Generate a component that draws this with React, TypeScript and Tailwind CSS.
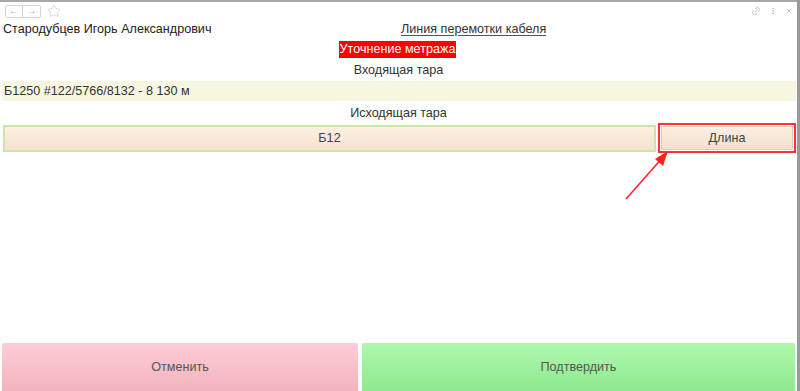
import { Link2, MoreVertical, X, Star } from 'lucide-react';

export default function App() {
  return (
    <div className="flex h-[391px] w-[800px] overflow-hidden bg-white text-[12.6px] text-[#333]" style={{ fontFamily: '"Liberation Sans", Arial, sans-serif' }}>
      <div className="relative flex min-w-0 flex-1 flex-col border-t-2 border-[#a8a8a8]">
        {/* top bar */}
        <div className="flex h-[16px] items-center justify-between pl-[5px] pr-[4px] pt-[2px]">
          <div className="flex items-center gap-[6px]">
            <div className="flex h-[13px] rounded-[2px] border border-[#d4d4d4] bg-white">
              <div className="flex w-[17px] items-center justify-center border-r border-[#d4d4d4] text-[10px] leading-none text-[#9a9a9a]">←</div>
              <div className="flex w-[17px] items-center justify-center text-[10px] leading-none text-[#9a9a9a]">→</div>
            </div>
            <Star className="h-[14px] w-[14px] text-[#d0d0d0]" strokeWidth={1.3} />
          </div>
          <div className="flex items-center gap-[8px] text-[#a8a8a8]">
            <Link2 className="h-[10px] w-[10px] -rotate-45" strokeWidth={1.5} />
            <MoreVertical className="h-[10px] w-[8px]" strokeWidth={2} />
            <X className="h-[8px] w-[8px]" strokeWidth={2} />
          </div>
        </div>

        {/* header line */}
        <div className="flex h-[23px] items-center pl-[3px]">
          <div className="w-[398px] text-[#222]">Стародубцев Игорь Александрович</div>
          <div className="text-[#333] underline decoration-[#555] underline-offset-2">Линия перемотки кабеля</div>
        </div>

        <div className="flex h-[17px] justify-center pr-[2px]">
          <span className="bg-[#ff0000] px-[1px] leading-[17px] text-white">Уточнение метража</span>
        </div>
        <div className="flex h-[23px] items-center justify-center pt-[1px] text-[#333]">Входящая тара</div>

        <div className="ml-[2px] mr-[1px] flex h-[20px] items-center bg-[#f7f7e1] px-[2px] text-[#333]">
          Б1250 #122/5766/8132 - 8 130 м
        </div>

        <div className="flex h-[22px] items-center justify-center pt-[2px] text-[#333]">Исходящая тара</div>

        <div className="flex h-[30px] items-start gap-[2px] pl-[3px] pr-[1px]">
          <div className="mt-[2px] flex h-[27px] flex-1 items-center justify-center border-2 border-[#c8e6a4] bg-gradient-to-b from-[#fcefe2] to-[#f6e2cf] text-[#444]">
            Б12
          </div>
          <div className="flex h-[30px] w-[138px] items-center justify-center border-2 border-[#ff3030] p-[1px]">
            <div className="flex h-full w-full items-center justify-center border border-[#d8cfc4] bg-gradient-to-b from-[#fcefe2] to-[#f4e0cc] text-[#444]">
              Длина
            </div>
          </div>
        </div>

        {/* annotation arrow */}
        <svg className="absolute left-[622px] top-[144px]" width="52" height="58" viewBox="0 0 52 58">
          <line x1="4" y1="53" x2="42" y2="10" stroke="#ff2020" strokeWidth="1.5" />
          <polygon points="46,5 33,13 41,20" fill="#ff2020" />
        </svg>

        <div className="flex-1" />

        <div className="flex h-[48px] gap-[4px] pl-[2px] pr-[2px]">
          <div className="flex w-[356px] items-center justify-center rounded-t-[2px] bg-gradient-to-b from-[#fecdd5] to-[#f2b3bf] text-[#555]">
            Отменить
          </div>
          <div className="flex flex-1 items-center justify-center rounded-t-[2px] bg-gradient-to-b from-[#adf8ad] to-[#8fe98f] text-[#555]">
            Подтвердить
          </div>
        </div>
      </div>
      <div className="w-[3px] bg-[#9a9a9a]" />
    </div>
  );
}
